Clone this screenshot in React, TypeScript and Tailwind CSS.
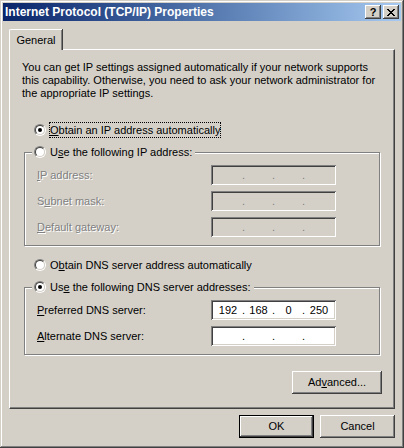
const raised =
  "shadow-[inset_-1px_-1px_#404040,inset_1px_1px_#ffffff,inset_-2px_-2px_#808080,inset_2px_2px_#d4d0c8]";
const sunken =
  "shadow-[inset_1px_1px_#808080,inset_-1px_-1px_#ffffff,inset_2px_2px_#404040,inset_-2px_-2px_#d4d0c8]";
const dim = "text-[#808080] [text-shadow:1px_1px_0_#ffffff]";

function Radio({ checked }: { checked?: boolean }) {
  return (
    <span className="flex h-[12px] w-[12px] shrink-0 items-center justify-center rounded-full border border-t-[#808080] border-l-[#808080] border-r-white border-b-white">
      <span className="flex h-[10px] w-[10px] items-center justify-center rounded-full border border-t-[#404040] border-l-[#404040] border-r-[#d4d0c8] border-b-[#d4d0c8] bg-white">
        {checked && <span className="h-[4px] w-[4px] rounded-full bg-black" />}
      </span>
    </span>
  );
}

function RadioRow({
  checked,
  focus,
  children,
}: {
  checked?: boolean;
  focus?: boolean;
  children: React.ReactNode;
}) {
  return (
    <div className="flex h-[16px] items-center gap-[3px]">
      <Radio checked={checked} />
      <span
        className={
          "flex h-[16px] items-center px-[1px] leading-[13px] " +
          (focus ? "outline outline-1 outline-dotted outline-black -outline-offset-1" : "")
        }
      >
        <span>{children}</span>
      </span>
    </div>
  );
}

function IpField({ value, disabled }: { value?: string[]; disabled?: boolean }) {
  const v = value ?? ["", "", "", ""];
  const dot = disabled ? "text-[#808080]" : "text-black";
  return (
    <div
      className={
        "flex h-[20px] w-[125px] items-center pl-[2px] " +
        sunken +
        (disabled ? " bg-[#d4d0c8]" : " bg-white")
      }
    >
      <span className="w-[30px] text-center">{v[0]}</span>
      <span className={"flex w-[1px] justify-center " + dot}>.</span>
      <span className="w-[29px] text-center">{v[1]}</span>
      <span className={"flex w-[1px] justify-center " + dot}>.</span>
      <span className="w-[29px] text-center">{v[2]}</span>
      <span className={"flex w-[1px] justify-center " + dot}>.</span>
      <span className="w-[30px] text-center">{v[3]}</span>
    </div>
  );
}

function FieldRow({
  label,
  disabled,
  value,
}: {
  label: React.ReactNode;
  disabled?: boolean;
  value?: string[];
}) {
  return (
    <div className="flex h-[20px] items-center">
      <span className={"w-[186px] pl-[12px] " + (disabled ? dim : "")}>{label}</span>
      <IpField disabled={disabled} value={value} />
    </div>
  );
}

function Button({
  children,
  def,
  className = "",
}: {
  children: React.ReactNode;
  def?: boolean;
  className?: string;
}) {
  if (def) {
    return (
      <div className={"h-[23px] w-[75px] border border-black " + className}>
        <div className={"flex h-full w-full items-center justify-center " + raised}>
          <span>{children}</span>
        </div>
      </div>
    );
  }
  return (
    <div
      className={"flex h-[23px] w-[75px] items-center justify-center " + raised + " " + className}
    >
      <span>{children}</span>
    </div>
  );
}

export default function App() {
  return (
    <div
      className={
        "flex h-[448px] w-[404px] flex-col bg-[#d4d0c8] p-[3px] text-[11px] leading-[13px] text-black font-['Liberation_Sans',Arial,sans-serif] shadow-[inset_-1px_-1px_#404040,inset_1px_1px_#d4d0c8,inset_-2px_-2px_#808080,inset_2px_2px_#ffffff]"
      }
    >
      {/* title bar */}
      <div className="flex h-[18px] shrink-0 items-center bg-gradient-to-r from-[#0a246a] to-[#a6caf0] pl-[2px] pr-[2px]">
        <span className="flex-1 text-[12px] font-bold text-white">
          Internet Protocol (TCP/IP) Properties
        </span>
        <div className="flex gap-[2px]">
          <div
            className={
              "flex h-[14px] w-[16px] items-center justify-center bg-[#d4d0c8] text-[11px] font-bold leading-none " +
              raised
            }
          >
            ?
          </div>
          <div
            className={"flex h-[14px] w-[16px] items-center justify-center bg-[#d4d0c8] " + raised}
          >
            <svg width="8" height="7" viewBox="0 0 8 7" shapeRendering="crispEdges">
              <path
                d="M0 0h2v1h-2zM6 0h2v1h-2zM1 1h2v1h-2zM5 1h2v1h-2zM2 2h4v1h-4zM3 3h2v1h-2zM2 4h4v1h-4zM1 5h2v1h-2zM5 5h2v1h-2zM0 6h2v1h-2zM6 6h2v1h-2z"
                fill="#000"
              />
            </svg>
          </div>
        </div>
      </div>

      {/* body */}
      <div className="flex flex-1 flex-col px-[6px] pt-[8px]">
        {/* tab */}
        <div className="relative z-10 -mb-[1px] flex h-[21px] w-[53px] items-center justify-center rounded-tl-[2px] border-l border-t border-white bg-[#d4d0c8] shadow-[inset_-1px_0_#808080,1px_0_#404040]">
          General
        </div>

        {/* panel */}
        <div className="flex h-[360px] w-[386px] flex-col border-l border-t border-white border-r border-b border-r-[#404040] border-b-[#404040] shadow-[inset_-1px_-1px_#808080]">
          <p className="mt-[11px] pl-[12px] leading-[13px]">
            You can get IP settings assigned automatically if your network supports
            <br />
            this capability. Otherwise, you need to ask your network administrator for
            <br />
            the appropriate IP settings.
          </p>

          <div className="mt-[22px] pl-[24px]">
            <RadioRow checked focus>
              <u>O</u>btain an IP address automatically
            </RadioRow>
          </div>

          <div className="ml-[14px] mt-[14px] w-[356px] border border-[#808080] pb-[8px] shadow-[inset_1px_1px_#ffffff,1px_1px_#ffffff]">
            <div className="-mt-[9px] ml-[7px] w-fit bg-[#d4d0c8] px-[2px]">
              <RadioRow>
                U<u>s</u>e the following IP address:
              </RadioRow>
            </div>
            <div className="mt-[5px] flex flex-col gap-[6px]">
              <FieldRow
                disabled
                label={
                  <>
                    <u>I</u>P address:
                  </>
                }
              />
              <FieldRow
                disabled
                label={
                  <>
                    S<u>u</u>bnet mask:
                  </>
                }
              />
              <FieldRow
                disabled
                label={
                  <>
                    <u>D</u>efault gateway:
                  </>
                }
              />
            </div>
          </div>

          <div className="mt-[11px] pl-[24px]">
            <RadioRow>
              O<u>b</u>tain DNS server address automatically
            </RadioRow>
          </div>

          <div className="ml-[14px] mt-[14px] w-[356px] border border-[#808080] pb-[8px] shadow-[inset_1px_1px_#ffffff,1px_1px_#ffffff]">
            <div className="-mt-[9px] ml-[7px] w-fit bg-[#d4d0c8] px-[2px]">
              <RadioRow checked>
                Us<u>e</u> the following DNS server addresses:
              </RadioRow>
            </div>
            <div className="mt-[5px] flex flex-col gap-[6px]">
              <FieldRow
                value={["192", "168", "0", "250"]}
                label={
                  <>
                    <u>P</u>referred DNS server:
                  </>
                }
              />
              <FieldRow
                value={["", "", "", ""]}
                label={
                  <>
                    <u>A</u>lternate DNS server:
                  </>
                }
              />
            </div>
          </div>

          <div className="mr-[12px] mt-[16px] flex justify-end">
            <Button className="w-[90px]">
              Ad<u>v</u>anced...
            </Button>
          </div>
        </div>

        {/* footer buttons */}
        <div className="mt-[6px] flex justify-end gap-[6px]">
          <Button def>OK</Button>
          <Button>Cancel</Button>
        </div>
      </div>
    </div>
  );
}
